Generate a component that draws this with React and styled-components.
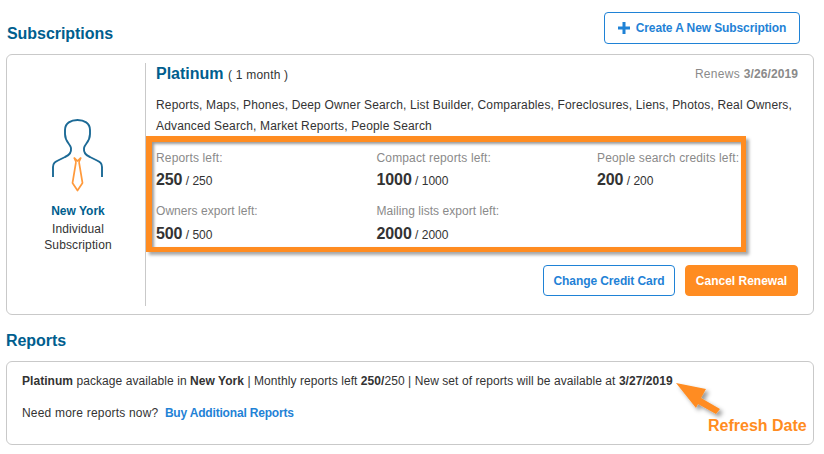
import React from 'react';
import styled, { createGlobalStyle } from 'styled-components';

const GlobalStyle = createGlobalStyle`
  html, body { margin: 0; padding: 0; background: #fff; }
  body { font-family: "Liberation Sans", Arial, sans-serif; font-size: 12px; color: #333; }
  * { box-sizing: border-box; }
`;

const Page = styled.div`
  width: 824px;
  height: 454px;
  padding: 12px 10px 0 6px;
  overflow: hidden;
`;

const Header = styled.div`
  display: flex;
  justify-content: space-between;
  align-items: flex-start;
  height: 42px;
  padding-right: 14px;
`;

const Title = styled.h2`
  margin: 0;
  font-size: 16px;
  line-height: 18px;
  font-weight: bold;
  letter-spacing: -0.05px;
  color: #005e8e;
  padding-left: ${p => p.$indent || 0}px;
  padding-top: ${p => p.$top || 0}px;
`;

const Button = styled.button`
  height: ${p => p.$tall ? 32 : 31}px;
  padding: 0 0 ${p => p.$tall ? 1 : 0}px;
  width: ${p => p.$width}px;
  border-radius: 4px;
  border: 1px solid ${p => p.$solid ? '#ff8c21' : '#1f82d6'};
  background: ${p => p.$solid ? '#ff8c21' : '#fff'};
  color: ${p => p.$solid ? '#fff' : '#1f82d6'};
  font: bold 12px "Liberation Sans", Arial, sans-serif;
  letter-spacing: ${p => p.$solid ? 0 : -0.1}px;
  display: flex;
  align-items: center;
  justify-content: center;
  gap: 6px;
`;

const Card = styled.div`
  border: 1px solid #c9c9c9;
  border-radius: 6px;
  background: #fff;
`;

const SubCard = styled(Card)`
  height: 261px;
  padding: 8px 0 8px 0;
  display: flex;
`;

const Profile = styled.div`
  width: 139px;
  border-right: 1px solid #c9c9c9;
  display: flex;
  flex-direction: column;
  align-items: center;
  padding: 56px 0 0 4px;
  text-align: center;
`;

const Region = styled.div`
  margin-top: 11px;
  font-weight: bold;
  color: #005e8e;
  line-height: 16px;
`;

const Kind = styled.div`
  margin-top: 2px;
  width: 90px;
  line-height: 16px;
  letter-spacing: 0.12px;
`;

const Body = styled.div`
  flex: 1;
  min-width: 0;
`;

const PlanRow = styled.div`
  display: flex;
  justify-content: space-between;
  align-items: center;
  height: 22px;
  padding: 0 15px 0 10px;
`;

const Plan = styled.div`
  letter-spacing: 0.2px;
`;

const PlanName = styled.span`
  font-size: 16px;
  font-weight: bold;
  letter-spacing: 0;
  color: #005e8e;
  margin-right: 1px;
`;

const Renews = styled.div`
  color: #8a8a8a;
  letter-spacing: 0.3px;
  b { font-weight: bold; letter-spacing: 0.1px; }
`;

const Features = styled.p`
  margin: 10px 0 0;
  padding: 0 10px;
  line-height: 21px;
  height: 41px;
  letter-spacing: 0.155px;
`;

const Highlight = styled.div`
  width: 600px;
  height: 116px;
  border: 6px solid #ff8c21;
  border-width: 6px 5px 5px 6px;
  box-shadow: inset 2px 2px 3px rgba(0,0,0,.4), 3px 3px 3px rgba(0,0,0,.35);
  padding: 9px 0 0 4px;
  display: grid;
  grid-template-columns: 220.5px 220.5px 1fr;
  grid-auto-rows: 53px;
  white-space: nowrap;
`;

const Stat = styled.div`
  color: #8a8a8a;
  line-height: 14px;
  letter-spacing: 0.15px;
  &:nth-child(n+4) { letter-spacing: 0.05px; }
`;

const Count = styled.div`
  margin-top: 6px;
  color: #333;
  line-height: 18px;
  letter-spacing: 0;
  b { font-size: 16px; font-weight: bold; letter-spacing: -0.1px; }
  ${Stat}:nth-child(n+4) & { margin-top: 7px; }
`;

const Actions = styled.div`
  display: flex;
  justify-content: flex-end;
  gap: 10px;
  margin-top: 13px;
  padding-right: 15px;
`;

const ReportsCard = styled(Card)`
  position: relative;
  height: 84px;
  margin-top: 11px;
  padding: 12px 15px;
  line-height: 14px;
  letter-spacing: 0.07px;
  b { letter-spacing: 0.05px; }
`;

const Note = styled.div`
  margin-top: ${p => p.$gap || 0}px;
`;

const Prompt = styled.span`
  letter-spacing: 0.2px;
`;

const Link = styled.a`
  margin-left: 3px;
  font-weight: bold;
  letter-spacing: -0.18px;
  color: #1f82d6;
`;

const ArrowMark = styled.svg`
  position: absolute;
  left: 669px;
  top: 21px;
  overflow: visible;
`;

const ArrowLabel = styled.div`
  position: absolute;
  left: 701px;
  top: 55px;
  font-size: 16px;
  line-height: 18px;
  font-weight: bold;
  letter-spacing: 0;
  color: #ff8c21;
`;

const stats = [
  ['Reports left:', 250, 250],
  ['Compact reports left:', 1000, 1000],
  ['People search credits left:', 200, 200],
  ['Owners export left:', 500, 500],
  ['Mailing lists export left:', 2000, 2000],
];

const PersonIcon = () => (
  <svg width="52" height="73" viewBox="0 0 52 73" fill="none" style={{ display: 'block' }}>
    <path
      d="M1 58 V48 C1 44 3 43 6 41.5 L13 38 C18 36 19.5 33 19 29 C18.5 25 13 23 13 15 V11 C13 4 19 1 25.5 1 C32 1 38 4 38 11 V15 C38 23 32.5 25 32 29 C31.5 33 33 36 38 38 L45 41.5 C48 43 50 44 50 48 V58"
      stroke="#1c6a96"
      strokeWidth="1.9"
    />
    <path
      d="M22 38.5 L24 43 M29 38.5 L27 43 M22 38.5 L25.5 42 L29 38.5 M24 43 L20.5 64 L25.5 71.5 L30.5 64 L27 43"
      stroke="#ff9a3c"
      strokeWidth="1.7"
      strokeLinejoin="round"
    />
  </svg>
);

const PlusIcon = () => (
  <svg width="12" height="12" viewBox="0 0 12 12" fill="#1f82d6">
    <path d="M4.5 0 H7.5 V4.5 H12 V7.5 H7.5 V12 H4.5 V7.5 H0 V4.5 H4.5 Z" />
  </svg>
);

const Arrow = () => (
  <ArrowMark width="50" height="40" viewBox="0 0 50 40">
    <defs>
      <filter id="arrow-shadow" x="-30%" y="-30%" width="170%" height="170%">
        <feDropShadow dx="3" dy="3" stdDeviation="2" floodColor="#000" floodOpacity="0.4" />
      </filter>
    </defs>
    <path
      d="M0 0 L30 6 L25 15 L44 26 L40 31 L22 21 L20 25 Z"
      fill="#ff8c21"
      filter="url(#arrow-shadow)"
    />
  </ArrowMark>
);

export default function App() {
  return (
    <Page>
      <GlobalStyle />
      <Header>
        <Title $top={13} $indent={1}>Subscriptions</Title>
        <Button $tall $width={196}><PlusIcon />Create A New Subscription</Button>
      </Header>

      <SubCard>
        <Profile>
          <PersonIcon />
          <Region>New York</Region>
          <Kind>Individual Subscription</Kind>
        </Profile>
        <Body>
          <PlanRow>
            <Plan><PlanName>Platinum</PlanName> ( 1 month )</Plan>
            <Renews>Renews <b>3/26/2019</b></Renews>
          </PlanRow>
          <Features>
            Reports, Maps, Phones, Deep Owner Search, List Builder, Comparables, Foreclosures, Liens, Photos, Real Owners, Advanced Search, Market Reports, People Search
          </Features>
          <Highlight>
            {stats.map(([label, left, total]) => (
              <Stat key={label}>
                {label}
                <Count><b>{left}</b> / {total}</Count>
              </Stat>
            ))}
          </Highlight>
          <Actions>
            <Button $width={132}>Change Credit Card</Button>
            <Button $solid $width={113}>Cancel Renewal</Button>
          </Actions>
        </Body>
      </SubCard>

      <Title $top={17}>Reports</Title>
      <ReportsCard>
        <Note>
          <b>Platinum</b> package available in <b>New York</b> | Monthly reports left <b>250/</b>250 | New set of reports will be available at <b>3/27/2019</b>
        </Note>
        <Note $gap={18}>
          <Prompt>Need more reports now?</Prompt> <Link>Buy Additional Reports</Link>
        </Note>
        <Arrow />
        <ArrowLabel>Refresh Date</ArrowLabel>
      </ReportsCard>
    </Page>
  );
}
